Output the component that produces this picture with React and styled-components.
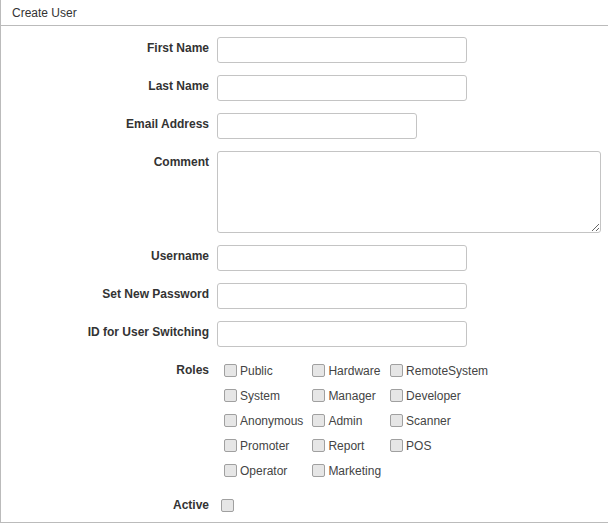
import React from "react";
import styled, { createGlobalStyle } from "styled-components";

const GlobalStyle = createGlobalStyle`
  body {
    margin: 0;
    background: #fff;
    font-family: "Liberation Sans", Arial, sans-serif;
    font-size: 12px;
    color: #333;
  }
`;

const Panel = styled.div`
  border-left: 1px solid #bbb;
  border-bottom: 1px solid #bbb;
  padding-bottom: 10px;
`;

const PanelHeader = styled.div`
  height: 25px;
  line-height: 26px;
  padding-left: 11px;
  border-bottom: 1px solid #bbb;
  font-size: 12px;
  color: #333;
`;

const Form = styled.form`
  padding-top: 11px;
`;

const Row = styled.div`
  display: grid;
  grid-template-columns: 208px 1fr;
  column-gap: 8px;
  margin-bottom: ${(p) => (p.$last ? "0" : "12px")};
`;

const Label = styled.label`
  text-align: right;
  font-weight: bold;
  padding-top: ${(p) => p.$top || "4px"};
  line-height: 14px;
`;

const TextInput = styled.input`
  box-sizing: border-box;
  width: ${(p) => p.$width || "250px"};
  height: 26px;
  border: 1px solid #c4c4c4;
  border-radius: 3px;
  padding: 2px 6px;
  font: inherit;
  outline: none;
`;

const TextArea = styled.textarea`
  box-sizing: border-box;
  width: 384px;
  height: 82px;
  border: 1px solid #c4c4c4;
  border-radius: 3px;
  padding: 4px 6px;
  font: inherit;
  outline: none;
  display: block;
`;

const RoleGrid = styled.div`
  display: grid;
  grid-template-columns: repeat(3, max-content);
  column-gap: 2px;
  margin-top: -1px;
`;

const RoleItem = styled.label`
  display: flex;
  align-items: center;
  height: 25px;
  padding-left: 3px;
  color: #444;
`;

const Check = styled.input.attrs({ type: "checkbox" })`
  appearance: none;
  -webkit-appearance: none;
  box-sizing: border-box;
  width: 13px;
  height: 13px;
  margin: ${(p) => p.$margin || "0 3px 0 4px"};
  border: 1px solid #a0a0a0;
  border-radius: 2px;
  background: #e6e6e6;
  flex-shrink: 0;
`;

const ActiveCell = styled.div`
  display: flex;
  align-items: flex-start;
`;

const roles = [
  "Public", "Hardware", "RemoteSystem",
  "System", "Manager", "Developer",
  "Anonymous", "Admin", "Scanner",
  "Promoter", "Report", "POS",
  "Operator", "Marketing",
];

const fields = [
  { label: "First Name" },
  { label: "Last Name" },
  { label: "Email Address", width: "200px" },
];

const fields2 = [
  { label: "Username" },
  { label: "Set New Password", type: "password" },
  { label: "ID for User Switching" },
];

const App = () => {
  return (
    <>
      <GlobalStyle />
      <Panel>
        <PanelHeader>Create User</PanelHeader>
        <Form onSubmit={(e) => e.preventDefault()}>
          {fields.map((f) => (
            <Row key={f.label}>
              <Label>{f.label}</Label>
              <div>
                <TextInput $width={f.width} />
              </div>
            </Row>
          ))}
          <Row>
            <Label>Comment</Label>
            <div>
              <TextArea />
            </div>
          </Row>
          {fields2.map((f) => (
            <Row key={f.label}>
              <Label>{f.label}</Label>
              <div>
                <TextInput type={f.type || "text"} />
              </div>
            </Row>
          ))}
          <Row>
            <Label $top="4px">Roles</Label>
            <RoleGrid>
              {roles.map((r) => (
                <RoleItem key={r}>
                  <Check />
                  {r}
                </RoleItem>
              ))}
            </RoleGrid>
          </Row>
          <Row $last>
            <Label $top="3px">Active</Label>
            <ActiveCell>
              <Check $margin="4px 0 0 4px" />
            </ActiveCell>
          </Row>
        </Form>
      </Panel>
    </>
  );
};

export default App;
